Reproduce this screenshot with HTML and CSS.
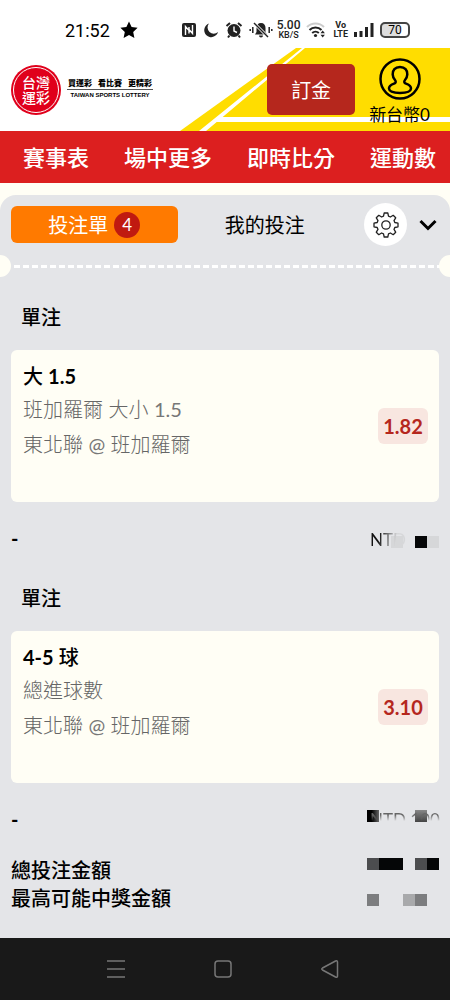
FILE: index.html
```html
<!DOCTYPE html>
<html lang="zh-Hant">
<head>
<meta charset="utf-8">
<meta name="viewport" content="width=device-width, initial-scale=1">
<title>台灣運彩</title>
<link rel="stylesheet" href="styles.css">
</head>
<body>
<div class="screen">
  <div class="status">
    <div class="status-left">
      <span class="clock">21:52</span>
      <svg width="18" height="18" viewBox="0 0 18 18"><path d="M9 .5l2.600 5.600 6 .7-4.400 4.100 1.200 6L9 13.900l-5.400 3 1.200-6L.4 6.800l6-.7z" fill="#000"/></svg>
    </div>
    <div class="status-right">
      <svg width="16" height="16" viewBox="0 0 16 16"><rect x="1" y="1" width="14" height="14" rx="2" fill="#222"/><path d="M4.500 13V4.500l3.500 4M11.500 3v8.500L8 7.500M8 5v3M8 8v3.500" fill="none" stroke="#fff" stroke-width="1.400"/></svg>
      <svg width="16" height="16" viewBox="0 0 16 16"><path d="M6 1.500A7 7 0 1 0 15 10 6.200 6.200 0 0 1 6 1.500z" fill="#222"/></svg>
      <svg width="18" height="18" viewBox="0 0 18 18"><circle cx="9" cy="9.500" r="6.500" fill="#222"/><path d="M1.500 5l3.500-3M16.500 5L13 2M4.500 14.500L3 16.500M13.500 14.500l1.500 2" stroke="#222" stroke-width="2"/><path d="M9 5.500v4.500l3 1.500" fill="none" stroke="#fff" stroke-width="1.400"/></svg>
      <svg class="mute" width="24" height="18" viewBox="0 0 24 18"><path d="M12 2c-3 0-4.500 2-4.500 5v4L6 13.500h12L16.500 11V7c0-3-1.500-5-4.500-5zM10 14.500h4a2 2 0 0 1-4 0z" fill="#222"/><path d="M5 2l14 14" stroke="#fff" stroke-width="3"/><path d="M5 2l14 14" stroke="#222" stroke-width="1.500"/><path d="M3.800 6v6M1.200 8v2M20.200 6v6M22.800 8v2" stroke="#222" stroke-width="1.500"/></svg>
      <span class="stack speed"><b>5.00</b><small>KB/S</small></span>
      <svg class="wifi" width="21" height="18" viewBox="0 0 21 18"><g fill="none" stroke-width="2"><path d="M1 6a12 12 0 0 1 17 0" stroke="#ccc"/><path d="M3.500 9a8.500 8.500 0 0 1 12 0M6.200 12a4.800 4.800 0 0 1 6.600 0" stroke="#222"/></g><circle cx="9.500" cy="14.500" r="1.600" fill="#222"/><path d="M14.500 12.200l2.200-2.700 2.200 2.700zM14.500 13.800l2.200 2.700 2.200-2.700z" fill="#222"/></svg>
      <span class="stack volte"><b>Vo</b><b>LTE</b></span>
      <svg class="signal" width="20" height="16" viewBox="0 0 20 16"><path d="M1.500 15v-5M7 15V9M12.500 15V5M18 15V1" stroke="#222" stroke-width="3"/></svg>
      <span class="battery">70</span>
    </div>
  </div>

  <header class="header">
    <svg class="court" width="270" height="83" viewBox="0 0 270 83"><path d="M116 0H270V83H0z" fill="#fd0"/><path d="M122 0h3L26 83h-7zM41 69H270v5H34z" fill="#fff"/></svg>
    <a class="brand" href="#">
      <span class="seal"><span class="seal-ring">台灣<br>運彩</span></span>
      <span class="brand-text">
        <span class="slogan"><span>買運彩</span><span>看比賽</span><span>更精彩</span></span>
        <span class="brand-en">TAIWAN SPORTS LOTTERY</span>
      </span>
    </a>
    <div class="account">
      <button class="deposit">訂金</button>
      <a class="user" href="#">
        <svg width="42" height="42" viewBox="0 0 42 42" fill="none" stroke="#000" stroke-width="2.500"><circle cx="21" cy="21" r="19.500"/><path d="M21 9c-5 0-7.500 3.200-7.300 7.500.1 2.600 1.300 4.300 2.300 5.500 1.300 1.500.8 3-1 3.700-3.200 1.200-5.200 2.800-5 5 .3 3 5 4.300 11 4.300s10.700-1.300 11-4.300c.2-2.200-1.800-3.800-5-5-1.800-.7-2.300-2.200-1-3.700 1-1.200 2.200-2.900 2.300-5.500C28.500 12.200 26 9 21 9z"/></svg>
        <span>新台幣0</span>
      </a>
    </div>
  </header>

  <nav class="nav">
    <a href="#">賽事表</a><a href="#">場中更多</a><a href="#">即時比分</a><a href="#">運動數</a>
  </nav>

  <main class="slip">
    <div class="tabs">
      <button class="tab active">投注單 <span class="count">4</span></button>
      <button class="tab">我的投注</button>
      <button class="gear" aria-label="設定"><svg width="26" height="26" viewBox="0 0 26 26" fill="none" stroke="#222" stroke-width="1.300" stroke-linejoin="round"><circle cx="13" cy="13" r="4.200"/><path d="M11.200 1h3.600l.7 3.200 1.900.8 2.800-1.700 2.500 2.500L21 8.600l.8 1.900 3.200.7v3.600l-3.200.7-.8 1.900 1.700 2.800-2.500 2.500-2.800-1.700-1.900.8-.7 3.200h-3.600l-.7-3.200-1.900-.8-2.800 1.700-2.500-2.500L5 17.400l-.8-1.900L1 14.800v-3.600l3.200-.7L5 8.600 3.300 5.800l2.500-2.500L8.600 5l1.900-.8z"/></svg></button>
      <button class="toggle" aria-label="收合"><svg width="18" height="12" viewBox="0 0 18 12" fill="none" stroke="#000" stroke-width="3"><path d="M1.500 2L9 9.500 16.500 2"/></svg></button>
    </div>
    <div class="tear"></div>

    <section class="bet">
      <h2>單注</h2>
      <div class="card">
        <div class="info">
          <h3>大 <b>1.5</b></h3>
          <p>班加羅爾 大小 <span class="latin">1.5</span></p>
          <p>東北聯 <span class="latin">@</span> 班加羅爾</p>
        </div>
        <span class="odds">1.82</span>
      </div>
      <div class="stake">
        <span>-</span>
        <span class="mosaic first"><i></i><i></i><i class="c-light"></i><i></i><i class="c-black"></i><i class="c-light"></i><span class="amount">NTD</span></span>
      </div>
    </section>

    <section class="bet">
      <h2>單注</h2>
      <div class="card">
        <div class="info">
          <h3><b>4-5</b> 球</h3>
          <p>總進球數</p>
          <p>東北聯 <span class="latin">@</span> 班加羅爾</p>
        </div>
        <span class="odds">3.10</span>
      </div>
      <div class="stake">
        <span>-</span>
        <span class="mosaic second"><i class="c-fade"></i><i></i><i></i><i></i><i class="c-mid"></i><i></i><span class="amount">NTD 100</span></span>
      </div>
    </section>

    <div class="totals">
      <div class="total"><span>總投注金額</span><span class="mosaic"><i class="c-dark"></i><i class="c-black"></i><i class="c-black"></i><i></i><i class="c-dark"></i><i class="c-black"></i></span></div>
      <div class="total"><span>最高可能中獎金額</span><span class="mosaic low"><i class="c-gray"></i><i></i><i></i><i class="c-silver"></i><i class="c-gray"></i><i></i></span></div>
    </div>
  </main>

  <footer class="system">
    <button aria-label="選單"><svg width="20" height="20" viewBox="0 0 20 20"><path d="M1 2h18M1 10h18M1 18h18"/></svg></button>
    <button aria-label="首頁"><svg width="20" height="20" viewBox="0 0 20 20"><rect x="2" y="2" width="16" height="16" rx="3"/></svg></button>
    <button aria-label="返回"><svg width="20" height="20" viewBox="0 0 20 20"><path d="M2.500 9L15.500 2q2-.8 2 1v14q0 1.800-2 1L2.500 11q-1.500-1 0-2z"/></svg></button>
  </footer>
</div>
</body>
</html>
```
FILE: styles.css
```css
* { box-sizing: border-box; }
body {
  margin: 0;
  background: #fffef5;
  color: #000;
  font-family: Lato, "Noto Sans CJK TC", sans-serif;
  font-size: 20px;
}
h2, h3, p { margin: 0; font-weight: 400; }
button { border: 0; padding: 0; background: none; font: inherit; color: inherit; }
a { color: inherit; text-decoration: none; }
svg { display: block; flex: none; }
.screen { min-height: 100vh; display: flex; flex-direction: column; }

.status {
  display: flex;
  justify-content: space-between;
  height: 48px;
  padding: 12px 40px 0 65px;
  background: #fff;
  font-family: Roboto, sans-serif;
}
.status-left, .status-right { display: flex; align-items: center; height: 36px; }
.status-left { gap: 10px; }
.status-right { gap: 6px; }
.clock { font-size: 18px; }
.mute { margin-right: -2px; }
.stack { display: flex; flex-direction: column; align-items: center; color: #222; }
.speed b { font-size: 12px; line-height: 11px; font-weight: 500; }
.speed small { font-size: 9px; line-height: 9px; font-weight: 500; }
.volte b { font-size: 9px; line-height: 9px; }
.battery {
  width: 30px;
  height: 16px;
  border: 2px solid #444;
  border-radius: 5px;
  background: linear-gradient(90deg, #ddd 70%, #fff 70%);
  font-size: 12px;
  line-height: 12px;
  text-align: center;
}

.header {
  position: relative;
  display: flex;
  justify-content: space-between;
  height: 83px;
  padding: 0 20px 0 11px;
  background: #fff;
}
.court { position: absolute; right: 0; top: 0; }
.brand { display: flex; align-items: center; gap: 6px; }
.seal { width: 50px; height: 50px; padding: 2px; border-radius: 50%; background: #e0001b; }
.seal-ring {
  display: block;
  height: 46px;
  padding-top: 7px;
  border: 1px solid #fff;
  border-radius: 50%;
  color: #fff;
  font-size: 14px;
  line-height: 15px;
  font-weight: 500;
  text-align: center;
}
.brand-text { display: flex; flex-direction: column; padding-bottom: 3px; }
.slogan {
  display: flex;
  gap: 6px;
  padding: 0 1px;
  border-bottom: 1px solid #555;
  font-size: 8px;
  line-height: 12px;
  font-weight: 900;
}
.brand-en {
  padding-top: 1px;
  font-family: "Liberation Sans", sans-serif;
  font-size: 6px;
  line-height: 8px;
  font-weight: 700;
  text-align: center;
}
.account { position: relative; display: flex; gap: 14px; }
.deposit {
  width: 88px;
  height: 51px;
  margin-top: 16px;
  border-radius: 5px;
  background: #b5271d;
  color: #fff;
}
.user { display: flex; flex-direction: column; align-items: center; padding-top: 10px; font-size: 17px; line-height: 30px; }

.nav {
  display: flex;
  gap: 35px;
  height: 52px;
  padding-left: 23px;
  overflow: hidden;
  background: #dc1f1f;
  color: #fff;
  font-size: 22px;
  line-height: 54px;
  font-weight: 500;
  white-space: nowrap;
}

.slip {
  flex: 1;
  margin-top: 12px;
  padding-bottom: 24px;
  border-radius: 16px 16px 0 0;
  background: #e4e5e8;
}
.tabs { display: flex; align-items: center; gap: 4px; padding: 8px 11px 0; }
.tab { flex: 1; height: 37px; }
.tab.active {
  display: flex;
  align-items: center;
  justify-content: center;
  gap: 6px;
  border-radius: 6px;
  background: #ff7a00;
  color: #fff;
}
.count { width: 26px; height: 26px; border-radius: 50%; background: #c01a10; font-size: 17px; line-height: 26px; }
.gear { display: grid; place-items: center; width: 43px; height: 43px; margin-left: 12px; border-radius: 50%; background: #fff; }
.toggle { display: grid; place-items: center; width: 18px; margin: 0 2px 0 8px; }
.tear {
  position: relative;
  height: 24px;
  margin-top: 8px;
  overflow: hidden;
  background: repeating-linear-gradient(90deg, #fff 0 6px, transparent 6px 9px) 14px 11px / 100% 3px no-repeat;
}
.tear::before, .tear::after {
  content: "";
  position: absolute;
  top: 1px;
  width: 22px;
  height: 22px;
  border-radius: 50%;
  background: #fffef5;
}
.tear::before { left: -11px; }
.tear::after { right: -11px; }

.bet { padding: 23px 11px 0; }
.bet + .bet { padding-top: 8px; }
.bet h2 { padding: 0 10px; line-height: 32px; font-size: 20px; font-weight: 500; }
.card {
  display: flex;
  justify-content: space-between;
  align-items: center;
  min-height: 152px;
  margin-top: 17px;
  padding: 0 11px 0 12px;
  border-radius: 6px;
  background: #fffef5;
}
.info { align-self: flex-start; padding-top: 10px; color: #666; }
.info h3 { color: #000; font-size: 20px; line-height: 32px; font-weight: 500; }
.info p { line-height: 36px; font-weight: 300; }
.info h3 + p { line-height: 34px; }
.latin { font-weight: 400; color: #777; }
.odds {
  width: 50px;
  border-radius: 6px;
  background: #f8e6e0;
  color: #b5271d;
  font-weight: 700;
  line-height: 36px;
  text-align: center;
}
.stake { display: flex; justify-content: space-between; height: 72px; padding-top: 20px; line-height: 32px; font-weight: 700; }

.mosaic { position: relative; display: grid; grid-template-columns: repeat(6, 12px); grid-auto-rows: 12px; height: 12px; }
.mosaic.first { margin-top: 14px; }
.mosaic.second { margin-top: 7px; }
.c-black { background: #050607; }
.c-dark { background: #4c4d4f; }
.c-gray { background: #7c7d7f; }
.c-silver { background: #a8a9ab; }
.c-light { background: #d6d7d9; }
.c-mid { background: linear-gradient(#888, #444); }
.c-fade { background: linear-gradient(90deg, #000 40%, #666); }
.amount {
  position: absolute;
  left: 3px;
  font-size: 17px;
  line-height: 20px;
  font-weight: 400;
  white-space: nowrap;
  background-clip: text;
  color: transparent;
}
.first .amount { top: -6px; background-image: linear-gradient(100deg, #111 25%, #d6d7d9 70%); }
.second .amount { top: 0; background-image: linear-gradient(#666 25%, transparent 55%); }

.totals { padding: 1px 11px 0; font-weight: 500; }
.total { display: flex; justify-content: space-between; align-items: flex-start; line-height: 28px; }
.total .mosaic { margin-top: 2px; }
.total .mosaic.low { margin-top: 10px; }

.system { display: flex; justify-content: center; gap: 87px; height: 62px; padding-right: 4px; background: #191919; }
.system svg { fill: none; stroke: #777; stroke-width: 1.5; }
```
